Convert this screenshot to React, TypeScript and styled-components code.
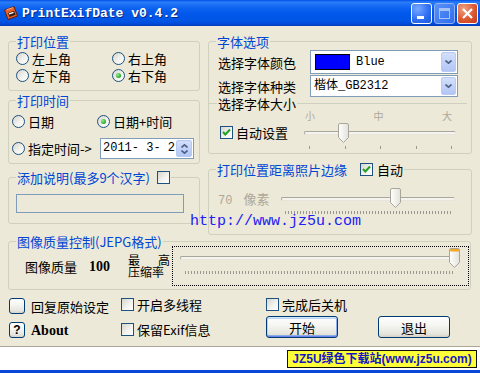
import styled, { createGlobalStyle, css } from "styled-components";

const CJK = `"Noto Sans CJK SC", "Liberation Sans", sans-serif`;
const MONO = `"Liberation Mono", "Noto Sans CJK SC", monospace`;

const GlobalStyle = createGlobalStyle`
  html, body {
    margin: 0;
    padding: 0;
    background: #ece9d8;
  }
  * {
    box-sizing: border-box;
  }
`;

const Window = styled.div`
  position: relative;
  width: 480px;
  height: 373px;
  overflow: hidden;
  display: flex;
  flex-direction: column;
  background: #ece9d8;
  font-family: ${CJK};
  font-size: 13px;
  line-height: 13px;
  color: #000;
`;

const TitleBar = styled.div`
  flex: none;
  height: 26px;
  display: flex;
  align-items: center;
  padding: 0 2px 0 3px;
  background: linear-gradient(
    to bottom,
    #0050e6 0px,
    #2a7cf8 2px,
    #1b6ff6 5px,
    #0a60ef 9px,
    #0058ea 14px,
    #0055e5 21px,
    #004ad8 24px,
    #003cb8 26px
  );
`;

const Caption = styled.span`
  margin-left: 3px;
  font-family: ${MONO};
  font-weight: bold;
  font-size: 13px;
  color: #fff;
  text-shadow: 1px 1px 0 #0a2a8a;
`;

const CaptionButtons = styled.div`
  margin-left: auto;
  display: flex;
  gap: 2px;
`;

const CapButton = styled.div<{ $kind: "min" | "max" | "close" }>`
  width: 21px;
  height: 21px;
  border: 1px solid #fff;
  border-radius: 3px;
  display: flex;
  align-items: center;
  justify-content: center;
  ${(p) =>
    p.$kind === "close"
      ? css`
          background: radial-gradient(circle at 30% 25%, #f0a184, #dc5a32 55%, #c2391a);
        `
      : p.$kind === "max"
      ? css`
          border-color: #8fb0f2;
          background: linear-gradient(135deg, #5a92f6, #2f6def);
        `
      : css`
          background: radial-gradient(circle at 30% 25%, #78a9ff, #2f70f4 55%, #1a56e0);
        `}
`;

const Body = styled.div`
  flex: 1;
  display: flex;
  flex-direction: column;
  padding: 9px 0 0 8px;
`;

const TopArea = styled.div`
  display: flex;
  gap: 8px;
  height: 200px;
`;

const Column = styled.div<{ $w: number }>`
  width: ${(p) => p.$w}px;
  display: flex;
  flex-direction: column;
`;

const Group = styled.fieldset<{ $h: number; $mt?: number; $w?: number }>`
  margin: ${(p) => p.$mt ?? 0}px 0 0;
  padding: 0;
  min-width: 0;
  width: ${(p) => (p.$w ? `${p.$w}px` : "100%")};
  height: ${(p) => p.$h}px;
  border: 1px solid #d0d0bf;
  border-radius: 3px;
`;

const Legend = styled.legend`
  margin-left: 7px;
  padding: 0 1px;
  height: 13px;
  display: flex;
  align-items: center;
  color: #0046d5;
  line-height: 13px;
  white-space: nowrap;
`;

const Plain = styled.span<{ $ml?: number }>`
  margin-left: ${(p) => p.$ml ?? 0}px;
  color: #000;
`;

const Choice = styled.label`
  display: flex;
  align-items: center;
  gap: 3px;
  white-space: nowrap;
`;

const Radio = styled.span<{ $on?: boolean }>`
  position: relative;
  flex: none;
  width: 13px;
  height: 13px;
  border-radius: 50%;
  border: 1px solid #1c5180;
  background: linear-gradient(135deg, #d6d5cd 0%, #f2f2ee 55%, #fff 100%);
  ${(p) =>
    p.$on &&
    css`
      &::after {
        content: "";
        position: absolute;
        left: 3px;
        top: 3px;
        width: 5px;
        height: 5px;
        border-radius: 50%;
        background: radial-gradient(circle at 35% 35%, #8ef08a, #21a121 75%);
      }
    `}
`;

const Box = styled.span<{ $ml?: number }>`
  flex: none;
  width: 13px;
  height: 13px;
  margin-left: ${(p) => p.$ml ?? 0}px;
  border: 1px solid #1c5180;
  background: linear-gradient(135deg, #d6d5cd 0%, #f2f2ee 55%, #fff 100%);
  display: inline-flex;
  align-items: center;
  justify-content: center;
`;

const PositionGrid = styled.div`
  display: grid;
  grid-template-columns: 96px 1fr;
  row-gap: 4px;
  padding: 4px 0 0 7px;
`;

const TimePanel = styled.div`
  padding: 8px 5px 0 3px;
`;

const TimeRow = styled.div`
  display: grid;
  grid-template-columns: 85px 1fr;
`;

const DateRow = styled.div`
  display: flex;
  align-items: center;
  justify-content: space-between;
  height: 21px;
  margin-top: 10px;
`;

const DateBox = styled.div`
  width: 94px;
  height: 21px;
  border: 1px solid #7f9db9;
  background: #fff;
  display: flex;
  align-items: center;
  padding: 1px 1px 1px 2px;
  font-family: ${MONO};
  font-size: 12px;
  white-space: pre;
`;

const Spin = styled.span`
  margin-left: auto;
  width: 16px;
  align-self: stretch;
  border-radius: 2px;
  background: linear-gradient(#d2defb, #b3c7f5);
  border: 1px solid #b5c8f0;
  display: flex;
  flex-direction: column;
  align-items: center;
  justify-content: center;
  gap: 2px;
`;

const TextField = styled.div`
  width: 168px;
  height: 19px;
  margin: 10px 0 0 7px;
  border: 1px solid #7f9db9;
  background: #ece9d8;
`;

const FontPanel = styled.div`
  display: flex;
  flex-direction: column;
  padding: 2px 0 0 9px;
`;

const FieldRow = styled.div<{ $mt?: number }>`
  display: flex;
  align-items: center;
  margin-top: ${(p) => p.$mt ?? 0}px;
`;

const FieldLabel = styled.span`
  width: 92px;
  white-space: nowrap;
`;

const Combo = styled.div<{ $h: number }>`
  width: 148px;
  height: ${(p) => p.$h}px;
  border: 1px solid #7f9db9;
  background: #fff;
  display: flex;
  align-items: center;
  padding: 1px 1px 1px 3px;
  font-family: ${MONO};
  font-size: 12px;
`;

const Swatch = styled.span<{ $color: string }>`
  width: 35px;
  height: 16px;
  margin: 0 6px 0 1px;
  border: 1px solid #000;
  background: ${(p) => p.$color};
`;

const DropButton = styled.span`
  margin-left: auto;
  width: 15px;
  align-self: stretch;
  border-radius: 2px;
  border: 1px solid #b9cbf3;
  background: linear-gradient(#d3dffc, #b2c6f5);
  display: flex;
  align-items: center;
  justify-content: center;
`;

const Divider = styled.div`
  display: flex;
  align-items: center;
  height: 13px;
  margin: 0 4px 0 -9px;
  white-space: nowrap;
  &::before {
    content: "";
    width: 8px;
    height: 1px;
    background: #d0d0bf;
  }
  &::after {
    content: "";
    flex: 1;
    height: 1px;
    background: #d0d0bf;
  }
  & > span {
    padding: 0 1px;
  }
`;

const ScaleLabels = styled.div`
  display: flex;
  justify-content: space-between;
  width: 147px;
  height: 10px;
  margin: 1px 0 0 87px;
  font-size: 10px;
  line-height: 10px;
  color: #aca899;
`;

const SizeRow = styled.div`
  display: flex;
  align-items: flex-start;
  margin-top: 2px;
  padding-right: 15px;
  & > label {
    margin: 3px 0 0 2px;
  }
`;

const MarginRow = styled.div`
  display: flex;
  align-items: flex-start;
  padding: 12px 16px 0 9px;
`;

const Disabled = styled.span`
  margin-top: 4px;
  color: #aca899;
  white-space: nowrap;
  & > b {
    font-weight: normal;
    font-family: ${MONO};
    font-size: 12px;
    margin-right: 11px;
  }
`;

const SliderBox = styled.div<{ $w: number; $pt?: number }>`
  position: relative;
  margin-left: auto;
  width: ${(p) => p.$w}px;
  padding-top: ${(p) => p.$pt ?? 8}px;
`;

const Track = styled.div`
  height: 4px;
  border: 1px solid #a9a79d;
  border-bottom-color: #e6e4dc;
  border-right-color: #e6e4dc;
  border-radius: 2px;
  background: #f4f3ee;
`;

const ThumbWrap = styled.div<{ $left: number }>`
  position: absolute;
  top: 0;
  left: ${(p) => p.$left}px;
  width: 11px;
  height: 20px;
`;

const SparseTicks = styled.div`
  display: flex;
  justify-content: space-between;
  margin-top: 11px;
  padding: 0 4px 0 5px;
  & > i {
    width: 1px;
    height: 3px;
    background: #9a9890;
  }
`;

const DenseTicks = styled.div<{ $mt: number; $ml: number; $w: number }>`
  width: ${(p) => p.$w}px;
  height: 3px;
  margin: ${(p) => p.$mt}px 0 0 ${(p) => p.$ml}px;
  background: repeating-linear-gradient(to right, #9a9890 0 1px, transparent 1px 3px);
`;

const QualityRow = styled.div`
  display: flex;
  align-items: center;
  margin-top: -2px;
  padding-left: 16px;
`;

const QualityValue = styled.span`
  margin-left: 12px;
  font-family: "Liberation Serif", serif;
  font-weight: bold;
  font-size: 14px;
`;

const Ratio = styled.div`
  margin-left: 18px;
  width: 42px;
  font-size: 12px;
  line-height: 12px;
`;

const RatioTop = styled.div`
  display: flex;
  justify-content: space-between;
`;

const FocusPanel = styled.div`
  margin-left: 2px;
  width: 297px;
  height: 40px;
  border: 1px dotted #000;
  padding: 1px 0 0 7px;
  & > div {
    margin-left: 0;
  }
`;

const Controls = styled.div`
  display: grid;
  grid-template-columns: 112px 145px 112px 1fr;
  grid-template-rows: 16px 22px;
  row-gap: 2px;
  margin-top: 8px;
  padding-left: 1px;
`;

const Cell = styled.div<{ $align?: string; $mt?: number }>`
  display: flex;
  align-items: center;
  align-self: ${(p) => p.$align ?? "center"};
  margin-top: ${(p) => p.$mt ?? 0}px;
  gap: 3px;
  white-space: nowrap;
`;

const PushBox = styled.span`
  flex: none;
  width: 16px;
  height: 16px;
  margin-right: 3px;
  border: 1px solid #003c74;
  border-radius: 3px;
  background: linear-gradient(#fff, #f4f4f0 45%, #e5e4dd 85%, #d6d0c5);
  display: flex;
  align-items: center;
  justify-content: center;
  font-family: "Liberation Sans", sans-serif;
  font-weight: bold;
  font-size: 12px;
`;

const AboutText = styled.span`
  font-family: "Liberation Serif", serif;
  font-weight: bold;
  font-size: 14px;
`;

const XPButton = styled.div<{ $default?: boolean }>`
  width: 72px;
  height: 22px;
  border: 1px solid #003c74;
  border-radius: 3px;
  background: linear-gradient(#fff, #f4f4f0 45%, #e5e4dd 85%, #d6d0c5);
  display: flex;
  align-items: center;
  justify-content: center;
  ${(p) =>
    p.$default &&
    css`
      box-shadow: inset 0 1px 0 #cee7ff, inset 0 -1px 0 #6982ee, inset 1px 0 0 #b9d1fa,
        inset -1px 0 0 #8cacef, inset 0 2px 0 #bcd4f6, inset 0 -2px 0 #89ade4;
    `}
`;

const Watermark = styled.div`
  position: absolute;
  left: 190px;
  top: 214px;
  font-family: ${MONO};
  font-size: 15px;
  line-height: 15px;
  color: #2020f4;
  white-space: nowrap;
`;

const StatusBar = styled.div`
  flex: none;
  height: 24px;
  border-top: 1px solid #aca899;
  background: #fff;
  display: flex;
  justify-content: flex-end;
  align-items: flex-start;
  padding: 3px 3px 0 0;
`;

const Promo = styled.div`
  width: 190px;
  height: 18px;
  border: 1px solid #111;
  background: #ffff38;
  color: #1616c4;
  font-family: "Liberation Sans", "Noto Sans CJK SC", sans-serif;
  font-weight: bold;
  font-size: 12px;
  display: flex;
  align-items: center;
  justify-content: center;
  white-space: nowrap;
`;

const FrameEdge = styled.div`
  flex: none;
  height: 3px;
  background: #0a46d8;
`;

function AppIcon() {
  return (
    <svg width="16" height="16" viewBox="0 0 16 16">
      <path d="M1.5 5 L11 1.5 L14.5 11 L5 14.5 Z" fill="#e8602c" stroke="#6a1a00" />
      <path d="M3.5 4.8 L10 2.6" stroke="#ffb08a" />
      <path d="M5 8 L11 5.8 L12.5 9.8 L6.5 12 Z" fill="#2b2018" />
      <path d="M5.8 8.3 L10.3 6.7 L10.8 8 L6.3 9.6 Z" fill="#fff" />
    </svg>
  );
}

function Tick() {
  return (
    <svg width="11" height="11" viewBox="0 0 11 11">
      <path d="M2 5 L4.3 7.5 L9 2.5" fill="none" stroke="#21a121" strokeWidth="2" />
    </svg>
  );
}

function Chevron({ up }: { up?: boolean }) {
  return (
    <svg width="7" height="4" viewBox="0 0 7 4">
      <path
        d={up ? "M0.5 3.5 L3.5 0.8 L6.5 3.5" : "M0.5 0.5 L3.5 3.2 L6.5 0.5"}
        fill="none"
        stroke="#4d6185"
        strokeWidth="1.6"
      />
    </svg>
  );
}

function Thumb({ left, hot }: { left: number; hot?: boolean }) {
  const id = hot ? "thumbHot" : "thumb";
  return (
    <ThumbWrap $left={left}>
      <svg width="11" height="20" viewBox="0 0 11 20">
        <defs>
          <linearGradient id={id} x1="0" y1="0" x2="1" y2="0">
            <stop offset="0" stopColor="#fff" />
            <stop offset="1" stopColor="#e3e1d8" />
          </linearGradient>
        </defs>
        <path
          d="M0.5 2 Q0.5 0.5 2 0.5 H9 Q10.5 0.5 10.5 2 V14.5 L5.5 19.5 L0.5 14.5 Z"
          fill={`url(#${id})`}
          stroke="#a8a69c"
        />
        {hot && <rect x="1" y="1" width="9" height="2.5" rx="1" fill="#f5a623" />}
      </svg>
    </ThumbWrap>
  );
}

export default function App() {
  return (
    <>
      <GlobalStyle />
      <Window>
        <TitleBar>
          <AppIcon />
          <Caption>PrintExifDate v0.4.2</Caption>
          <CaptionButtons>
            <CapButton $kind="min">
              <svg width="19" height="19" viewBox="0 0 19 19">
                <rect x="5" y="12" width="7" height="3" fill="#fff" />
              </svg>
            </CapButton>
            <CapButton $kind="max">
              <svg width="19" height="19" viewBox="0 0 19 19">
                <rect x="4.5" y="4.5" width="10" height="10" fill="none" stroke="#a9c2f4" />
                <rect x="4" y="4" width="11" height="3" fill="#a9c2f4" />
              </svg>
            </CapButton>
            <CapButton $kind="close">
              <svg width="19" height="19" viewBox="0 0 19 19">
                <path d="M5 5 L14 14 M14 5 L5 14" stroke="#fff" strokeWidth="2.2" />
              </svg>
            </CapButton>
          </CaptionButtons>
        </TitleBar>

        <Body>
          <TopArea>
            <Column $w={192}>
              <Group $h={56}>
                <Legend>打印位置</Legend>
                <PositionGrid>
                  <Choice>
                    <Radio />
                    左上角
                  </Choice>
                  <Choice>
                    <Radio />
                    右上角
                  </Choice>
                  <Choice>
                    <Radio />
                    左下角
                  </Choice>
                  <Choice>
                    <Radio $on />
                    右下角
                  </Choice>
                </PositionGrid>
              </Group>

              <Group $h={70} $mt={3}>
                <Legend>打印时间</Legend>
                <TimePanel>
                  <TimeRow>
                    <Choice>
                      <Radio />
                      日期
                    </Choice>
                    <Choice>
                      <Radio $on />
                      日期+时间
                    </Choice>
                  </TimeRow>
                  <DateRow>
                    <Choice>
                      <Radio />
                      指定时间-&gt;
                    </Choice>
                    <DateBox>
                      2011- 3- 2
                      <Spin>
                        <Chevron up />
                        <Chevron />
                      </Spin>
                    </DateBox>
                  </DateRow>
                </TimePanel>
              </Group>

              <Group $h={53} $mt={7}>
                <Legend>
                  添加说明(最多9个汉字)
                  <Box $ml={7} />
                </Legend>
                <TextField />
              </Group>
            </Column>

            <Column $w={264}>
              <Group $h={119}>
                <Legend>字体选项</Legend>
                <FontPanel>
                  <FieldRow>
                    <FieldLabel>选择字体颜色</FieldLabel>
                    <Combo $h={24}>
                      <Swatch $color="#0000ff" />
                      Blue
                      <DropButton>
                        <Chevron />
                      </DropButton>
                    </Combo>
                  </FieldRow>
                  <FieldRow $mt={1}>
                    <FieldLabel>选择字体种类</FieldLabel>
                    <Combo $h={22}>
                      楷体_GB2312
                      <DropButton>
                        <Chevron />
                      </DropButton>
                    </Combo>
                  </FieldRow>
                  <Divider>
                    <span>选择字体大小</span>
                  </Divider>
                  <ScaleLabels>
                    <span>小</span>
                    <span>中</span>
                    <span>大</span>
                  </ScaleLabels>
                  <SizeRow>
                    <Choice>
                      <Box>
                        <Tick />
                      </Box>
                      自动设置
                    </Choice>
                    <SliderBox $w={152}>
                      <Track />
                      <Thumb left={34} />
                      <SparseTicks>
                        <i />
                        <i />
                        <i />
                        <i />
                        <i />
                      </SparseTicks>
                    </SliderBox>
                  </SizeRow>
                </FontPanel>
              </Group>

              <Group $h={72} $mt={9}>
                <Legend>
                  打印位置距离照片边缘
                  <Box $ml={13}>
                    <Tick />
                  </Box>
                  <Plain $ml={4}>自动</Plain>
                </Legend>
                <MarginRow>
                  <Disabled>
                    <b>70</b>像素
                  </Disabled>
                  <SliderBox $w={174} $pt={9}>
                    <Track />
                    <Thumb left={109} />
                    <DenseTicks $mt={10} $ml={4} $w={166} />
                  </SliderBox>
                </MarginRow>
              </Group>
            </Column>
          </TopArea>

          <Group $h={55} $w={463}>
            <Legend>图像质量控制(JEPG格式)</Legend>
            <QualityRow>
              <span>图像质量</span>
              <QualityValue>100</QualityValue>
              <Ratio>
                <RatioTop>
                  <span>最</span>
                  <span>高</span>
                </RatioTop>
                <div>压缩率</div>
              </Ratio>
              <FocusPanel>
                <SliderBox $w={278}>
                  <Track />
                  <Thumb left={269} hot />
                  <DenseTicks $mt={11} $ml={5} $w={270} />
                </SliderBox>
              </FocusPanel>
            </QualityRow>
          </Group>

          <Controls>
            <Cell>
              <PushBox />
              回复原始设定
            </Cell>
            <Cell $align="start">
              <Box />
              开启多线程
            </Cell>
            <Cell $align="start">
              <Box />
              完成后关机
            </Cell>
            <span />
            <Cell $align="end">
              <PushBox>?</PushBox>
              <AboutText>About</AboutText>
            </Cell>
            <Cell $mt={4}>
              <Box />
              保留Exif信息
            </Cell>
            <XPButton $default>开始</XPButton>
            <XPButton>退出</XPButton>
          </Controls>
        </Body>

        <StatusBar>
          <Promo>JZ5U绿色下载站(www.jz5u.com)</Promo>
        </StatusBar>
        <FrameEdge />

        <Watermark>http://www.jz5u.com</Watermark>
      </Window>
    </>
  );
}
